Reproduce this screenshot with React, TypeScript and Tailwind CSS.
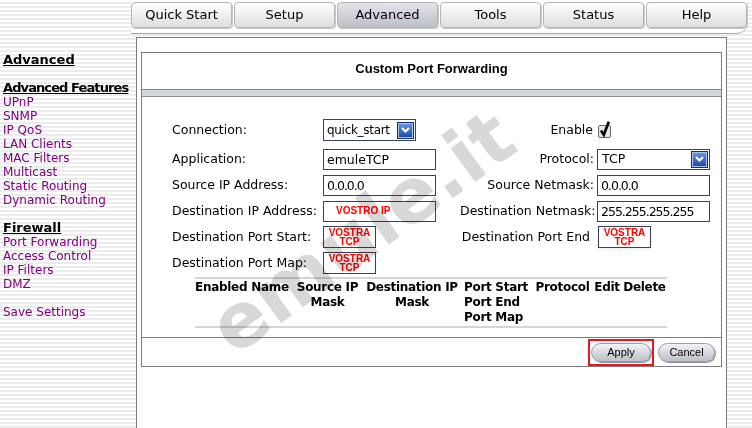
import React from "react";

const tabs = ["Quick Start", "Setup", "Advanced", "Tools", "Status", "Help"];

type NavItem = { label: string; head?: boolean; tight?: boolean } | null;

const nav: NavItem[] = [
  { label: "Advanced", head: true },
  null,
  { label: "Advanced Features", head: true, tight: true },
  { label: "UPnP" },
  { label: "SNMP" },
  { label: "IP QoS" },
  { label: "LAN Clients" },
  { label: "MAC Filters" },
  { label: "Multicast" },
  { label: "Static Routing" },
  { label: "Dynamic Routing" },
  null,
  { label: "Firewall", head: true },
  { label: "Port Forwarding" },
  { label: "Access Control" },
  { label: "IP Filters" },
  { label: "DMZ" },
  null,
  { label: "Save Settings" },
];

function SelectArrow() {
  return (
    <span className="flex h-[17px] w-[17px] shrink-0 items-center justify-center border border-[#1a2a78] bg-linear-to-b from-[#6c98e4] to-[#1c46a2] shadow-[inset_0_0_0_1px_#a9c2f0]">
      <svg width="9" height="6" viewBox="0 0 9 6">
        <path d="M1 1 L4.5 4.5 L8 1" stroke="#ffffff" strokeWidth="2" fill="none" />
      </svg>
    </span>
  );
}

function Checkbox() {
  return (
    <svg width="16" height="18" viewBox="0 0 16 18">
      <rect x="1.5" y="4.5" width="12" height="12" rx="1.5" fill="#e6e6e6" stroke="#6a6a6a" />
      <path d="M4 9.5 L6.8 13.8 L11.8 0.8" stroke="#000000" strokeWidth="2.6" fill="none" />
    </svg>
  );
}

function RedTag({ lines }: { lines: string[] }) {
  return (
    <div className="flex flex-col items-center font-['Liberation_Sans',Arial,sans-serif] text-[10px] font-bold leading-[9.5px] text-[#ff0000]">
      {lines.map((l) => (
        <span key={l}>{l}</span>
      ))}
    </div>
  );
}

function TextBox({ value, numeric }: { value: string; numeric?: boolean }) {
  return (
    <div
      className={`h-[21px] w-[113px] border border-[#3a4450] bg-white px-[3px] leading-[19px] ${
        numeric ? "tracking-[-1px]" : ""
      }`}
    >
      {value}
    </div>
  );
}

function TagBox() {
  return (
    <div className="flex h-[22px] w-[53px] items-center justify-center border border-[#3a4450] bg-white">
      <RedTag lines={["VOSTRA", "TCP"]} />
    </div>
  );
}

function Row({
  label,
  control,
  rightLabel,
  rightControl,
  rightPad = "pr-[3px]",
  top = "mt-[4px]",
}: {
  label: string;
  control: React.ReactNode;
  rightLabel?: string;
  rightControl?: React.ReactNode;
  rightPad?: string;
  top?: string;
}) {
  return (
    <div className={`flex h-[22px] items-center ${top}`}>
      <div className="w-[151px] whitespace-nowrap">{label}</div>
      <div className="w-[137px]">{control}</div>
      <div className={`w-[137px] whitespace-nowrap text-right ${rightPad}`}>{rightLabel}</div>
      <div>{rightControl}</div>
    </div>
  );
}

function HeadCell({ w, left, children }: { w: string; left?: boolean; children: React.ReactNode }) {
  return (
    <div className={`${w} whitespace-nowrap ${left ? "pl-[2px] text-left" : "text-center"}`}>{children}</div>
  );
}

export default function App() {
  return (
    <div className="relative h-[428px] w-[752px] overflow-hidden bg-[image:repeating-linear-gradient(180deg,#ffffff_0px,#ffffff_2px,#ececec_2px,#ececec_4px)] font-['DejaVu_Sans',Verdana,sans-serif] text-black">
      {/* Tabs */}
      <div className="ml-[131px] flex h-[34px] w-[616px] gap-[2px] rounded-br-[10px] border-b border-[#a8a8a8] bg-white pt-[2px]">
        {tabs.map((t) => (
          <div
            key={t}
            className={`flex h-[26px] flex-1 items-center justify-center rounded-[4px] border border-[#b4b4b4] text-[13px] shadow-[1px_1px_0_#c8c8c8] ${
              t === "Advanced"
                ? "bg-linear-to-b from-[#e2e5e9] to-[#bcc1c8]"
                : "bg-linear-to-b from-[#ffffff] to-[#dedede]"
            }`}
          >
            {t}
          </div>
        ))}
      </div>

      <div className="mt-[3px] flex">
        {/* Sidebar */}
        <div className="w-[136px] pl-[3px] pt-[16px]">
          {nav.map((n, i) =>
            n === null ? (
              <div key={i} className="h-[14px]" />
            ) : n.head ? (
              <div
                key={i}
                className={`h-[14px] whitespace-nowrap text-[13px] font-bold leading-[14px] underline ${
                  n.tight ? "tracking-[-0.9px]" : ""
                }`}
              >
                {n.label}
              </div>
            ) : (
              <div key={i} className="h-[14px] whitespace-nowrap text-[12px] leading-[14px] text-[#800080]">
                {n.label}
              </div>
            )
          )}
        </div>

        {/* Main */}
        <div className="h-[391px] w-[591px] border-x border-t border-[#7c7c7c] bg-white px-[4px] pt-[14px]">
          <div className="border border-[#7c7c7c]">
            <div className="flex h-[36px] items-center justify-center pb-[5px] font-['Liberation_Sans',Arial,sans-serif] text-[13px] font-bold">
              Custom Port Forwarding
            </div>
            <div className="h-[8px] border-y border-[#8a8a8a] bg-[#d3d7db]" />

            <div className="pb-[9px] pl-[30px] pt-[22px] text-[12.5px]">
              <Row
                top="mt-0"
                label="Connection:"
                control={
                  <div className="flex h-[22px] w-[93px] items-center justify-between border border-[#3a4450] bg-white pl-[3px] pr-[1px] text-[12px] tracking-[-0.3px]">
                    <span>quick_start</span>
                    <SelectArrow />
                  </div>
                }
                rightLabel="Enable"
                rightPad="pr-[4px]"
                rightControl={<Checkbox />}
              />
              <Row
                top="mt-[7px]"
                label="Application:"
                control={<TextBox value="emuleTCP" />}
                rightLabel="Protocol:"
                rightControl={
                  <div className="flex h-[21px] w-[113px] items-center justify-between border border-[#3a4450] bg-white pl-[4px] pr-[1px]">
                    <span>TCP</span>
                    <SelectArrow />
                  </div>
                }
              />
              <Row
                label="Source IP Address:"
                control={<TextBox value="0.0.0.0" numeric />}
                rightLabel="Source Netmask:"
                rightControl={<TextBox value="0.0.0.0" numeric />}
              />
              <Row
                label="Destination IP Address:"
                control={
                  <div className="flex h-[21px] w-[113px] items-center border border-[#3a4450] bg-white pl-[12px]">
                    <RedTag lines={["VOSTRO IP"]} />
                  </div>
                }
                rightLabel="Destination Netmask:"
                rightControl={<TextBox value="255.255.255.255" numeric />}
              />
              <Row
                label="Destination Port Start:"
                control={<TagBox />}
                rightLabel="Destination Port End"
                rightPad="pr-[7px]"
                rightControl={
                  <div className="-my-[2px] bg-[#f4f4f4] px-[1px] py-[2px]">
                    <TagBox />
                  </div>
                }
              />
              <Row label="Destination Port Map:" control={<TagBox />} />

              <div className="ml-[23px] mt-[3px] w-[472px] border-y-2 border-[#d2d6da] text-[12px] font-bold leading-[15px] tracking-[-0.3px]">
                <div className="flex pb-[1px] pt-[1px]">
                  <HeadCell w="w-[52px]">Enabled</HeadCell>
                  <HeadCell w="w-[46px]">Name</HeadCell>
                  <HeadCell w="w-[69px]">
                    Source IP
                    <br />
                    Mask
                  </HeadCell>
                  <HeadCell w="w-[100px]">
                    Destination IP
                    <br />
                    Mask
                  </HeadCell>
                  <HeadCell w="w-[71px]" left>
                    Port Start
                    <br />
                    Port End
                    <br />
                    Port Map
                  </HeadCell>
                  <HeadCell w="w-[59px]">Protocol</HeadCell>
                  <HeadCell w="w-[30px]">Edit</HeadCell>
                  <HeadCell w="w-[45px]">Delete</HeadCell>
                </div>
              </div>
            </div>

            <div className="flex h-[29px] items-center justify-end gap-[4px] border-t border-[#7c7c7c] pr-[6px] font-['Liberation_Sans',Arial,sans-serif] text-[11px]">
              <div className="border-2 border-[#e8141e] px-[1px] py-[2px]">
                <div className="flex h-[19px] w-[60px] items-center justify-center rounded-full border border-[#9a9ea6] bg-linear-to-b from-[#f2f3f5] to-[#bcc1c9] shadow-[1px_1px_0_#8c9098]">
                  Apply
                </div>
              </div>
              <div className="flex h-[19px] w-[57px] items-center justify-center rounded-full border border-[#9a9ea6] bg-linear-to-b from-[#f2f3f5] to-[#bcc1c9] shadow-[1px_1px_0_#8c9098]">
                Cancel
              </div>
            </div>
          </div>
        </div>
      </div>

      {/* Watermark */}
      <div className="pointer-events-none absolute left-[362px] top-[232px] -translate-x-1/2 -translate-y-1/2 -rotate-[36deg] whitespace-nowrap text-[76px] font-bold leading-none text-[#d8d8d8] mix-blend-multiply">
        emule.it
      </div>
    </div>
  );
}
